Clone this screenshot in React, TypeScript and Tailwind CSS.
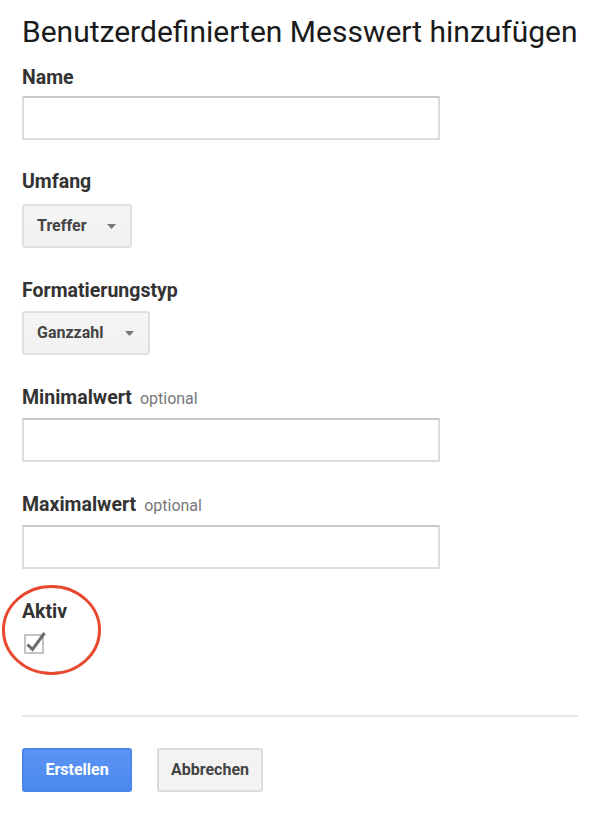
import React from "react";

const font = { fontFamily: "Roboto, 'Liberation Sans', Arial, sans-serif" };

function Label({ text, optional }: { text: string; optional?: boolean }) {
  return (
    <div className="flex items-baseline gap-[8px] leading-[20px]">
      <span className="text-[19.5px] font-bold text-[#333333]">{text}</span>
      {optional && <span className="text-[16px] text-[#777777]">optional</span>}
    </div>
  );
}

function TextInput() {
  return (
    <div className="h-[44px] w-[418px] border-2 border-[#dcdcdc] border-t-[#c8c8c8] bg-white" />
  );
}

function Select({ text, width }: { text: string; width: string }) {
  return (
    <div
      className={`flex h-[44px] ${width} items-center justify-between rounded-[3px] border-2 border-[#e0e0e0] bg-gradient-to-b from-[#f5f5f5] to-[#f1f1f1] pl-[13px] pr-[14px]`}
    >
      <span className="text-[16px] font-bold text-[#444444]">{text}</span>
      <svg width="9" height="5" viewBox="0 0 9 5">
        <path d="M0 0 L9 0 L4.5 5 Z" fill="#777777" />
      </svg>
    </div>
  );
}

export default function App() {
  return (
    <div className="min-h-[822px] w-[606px] bg-white" style={font}>
      <div className="w-[578px] pl-[22px] pt-[13px]">
        <h1 className="text-[30px] font-normal leading-[37px] text-[#1a1a1a]">
          Benutzerdefinierten Messwert hinzufügen
        </h1>

        <div className="mt-[18px]">
          <Label text="Name" />
          <div className="mt-[8px]">
            <TextInput />
          </div>
        </div>

        <div className="mt-[32px]">
          <Label text="Umfang" />
          <div className="mt-[12px]">
            <Select text="Treffer" width="w-[110px]" />
          </div>
        </div>

        <div className="mt-[33px]">
          <Label text="Formatierungstyp" />
          <div className="mt-[10px]">
            <Select text="Ganzzahl" width="w-[128px]" />
          </div>
        </div>

        <div className="mt-[33px]">
          <Label text="Minimalwert" optional />
          <div className="mt-[9px]">
            <TextInput />
          </div>
        </div>

        <div className="mt-[33px]">
          <Label text="Maximalwert" optional />
          <div className="mt-[9px]">
            <TextInput />
          </div>
        </div>

        <div className="relative mt-[33px]">
          <Label text="Aktiv" />
          <div className="mt-[12px] ml-[2px] h-[20px] w-[20px]">
            <svg width="24" height="24" viewBox="0 0 24 24" className="overflow-visible">
              <rect x="1" y="1" width="18" height="18" fill="white" stroke="#c4c4c4" strokeWidth="2" />
              <path d="M3.5 10.5 L8.5 15.5 L20.5 -1" fill="none" stroke="#6b6b6b" strokeWidth="3" strokeLinejoin="miter" />
            </svg>
          </div>
          <svg
            className="pointer-events-none absolute left-[-20px] top-[-18px]"
            width="102"
            height="92"
            viewBox="0 0 102 92"
          >
            <ellipse cx="49.5" cy="46" rx="48" ry="43.5" fill="none" stroke="#e8482d" strokeWidth="3" />
          </svg>
        </div>

        <div className="mt-[61px] h-[2px] w-[556px] bg-[#e5e5e5]" />

        <div className="mt-[31px] flex gap-[25px]">
          <button className="h-[44px] w-[110px] rounded-[3px] border-2 border-[#4a86ec] bg-gradient-to-b from-[#5b95f5] to-[#4b88ee] text-[16px] font-bold text-white">
            Erstellen
          </button>
          <button className="h-[44px] w-[106px] rounded-[3px] border-2 border-[#dcdcdc] bg-[#f3f3f3] text-[16px] font-bold text-[#444444]">
            Abbrechen
          </button>
        </div>
      </div>
    </div>
  );
}
